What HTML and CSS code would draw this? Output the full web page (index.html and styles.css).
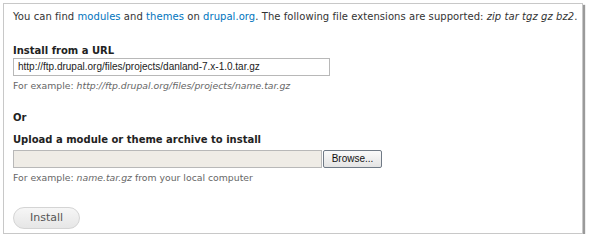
FILE: index.html
```html
<!DOCTYPE html>
<html>
<head>
<meta charset="utf-8">
<link rel="stylesheet" href="styles.css">
</head>
<body>
<div class="frame">
  <p class="intro">You can find <a href="#">modules</a> and <a href="#">themes</a> on <a href="#">drupal.org</a>. The following file extensions are supported: <em>zip tar tgz gz bz2</em>.</p>
  <div class="item url-item">
    <label class="label">Install from a URL</label>
    <div class="text-input">http://ftp.drupal.org/files/projects/danland-7.x-1.0.tar.gz</div>
    <div class="desc">For example: <em>http://ftp.drupal.org/files/projects/name.tar.gz</em></div>
  </div>
  <div class="or">Or</div>
  <div class="item upload-item">
    <label class="label">Upload a module or theme archive to install</label>
    <div class="file-row">
      <div class="file-input"></div>
      <div class="browse">Browse...</div>
    </div>
    <div class="desc">For example: <em>name.tar.gz</em> from your local computer</div>
  </div>
  <div class="actions">
    <div class="install">Install</div>
  </div>
</div>
</body>
</html>
```
FILE: styles.css
```css
html, body {
  margin: 0;
  padding: 0;
  background: #fff;
}
body {
  font-family: "DejaVu Sans", Verdana, sans-serif;
  font-size: 10px;
  color: #333;
}
.frame {
  margin: 3px 0 0 3px;
  width: 580px;
  height: 231px;
  box-sizing: border-box;
  border: 1px solid #c8c8c8;
  box-shadow: 2px 2px 1px #9a9a9a;
  padding: 6px 4px 0 9px;
}
.intro {
  margin: 0;
  line-height: 14px;
  letter-spacing: 0.06px;
  white-space: nowrap;
}
.intro a {
  color: #0074bd;
  text-decoration: none;
}
.intro em {
  font-style: italic;
}
.item {
  display: flex;
  flex-direction: column;
  align-items: flex-start;
}
.url-item {
  margin-top: 20px;
}
.label {
  font-weight: bold;
  line-height: 14px;
  color: #222;
}
.text-input {
  width: 317px;
  height: 18px;
  box-sizing: border-box;
  border: 1px solid #b8b8b8;
  font-family: "Liberation Sans", Arial, sans-serif;
  font-size: 10px;
  line-height: 16px;
  padding-left: 4px;
  color: #222;
}
.desc {
  margin-top: 4px;
  font-size: 9.3px;
  line-height: 12px;
  color: #666;
  white-space: nowrap;
}
.or {
  margin-top: 19px;
  font-weight: bold;
  line-height: 14px;
  color: #222;
}
.upload-item {
  margin-top: 8px;
}
.file-row {
  margin-top: 3px;
  display: flex;
  align-items: flex-start;
}
.file-input {
  width: 309px;
  height: 18px;
  box-sizing: border-box;
  border: 1px solid #b8b8b8;
  background: #efece6;
}
.browse {
  margin-left: 1px;
  width: 59px;
  height: 18px;
  box-sizing: border-box;
  border: 1px solid #707a86;
  border-radius: 2px;
  background: linear-gradient(#fafafa, #e4e4e4);
  font-family: "Liberation Sans", Arial, sans-serif;
  font-size: 10px;
  line-height: 16px;
  text-align: center;
  color: #111;
}
.actions {
  margin-top: 23px;
}
.install {
  width: 67px;
  height: 22px;
  box-sizing: border-box;
  border: 1px solid #d4d4d4;
  border-radius: 11px;
  background: linear-gradient(#f6f6f6, #e6e6e6);
  font-size: 11px;
  line-height: 20px;
  text-align: center;
  color: #555;
}
```
